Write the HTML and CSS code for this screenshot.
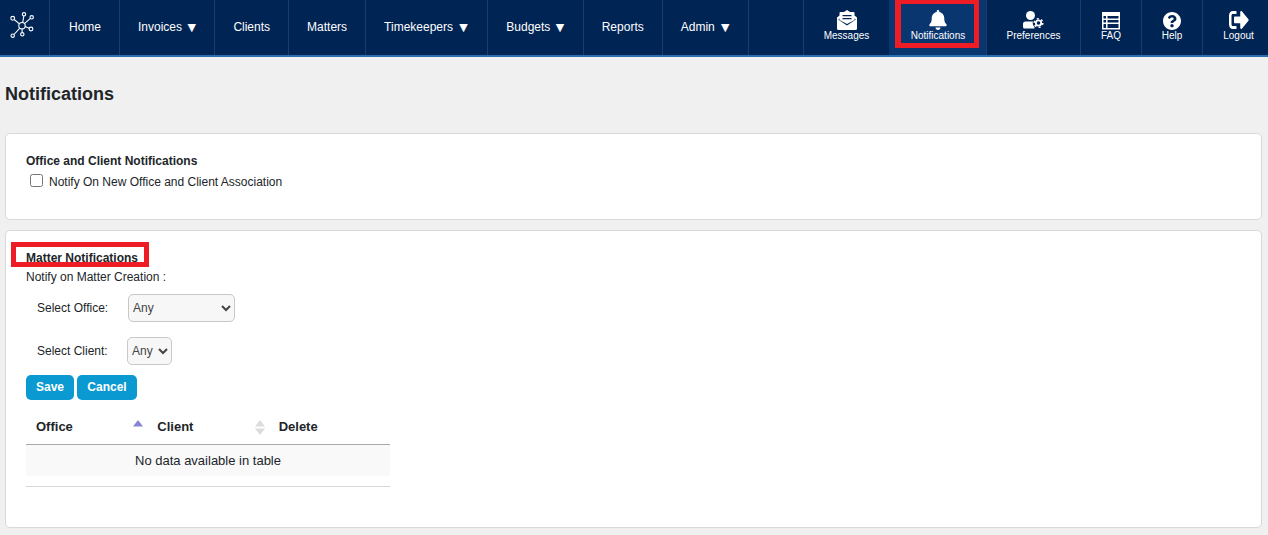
FILE: index.html
```html
<!DOCTYPE html>
<html lang="en">
<head>
<meta charset="utf-8">
<title>Notifications</title>
<link rel="stylesheet" href="styles.css">
</head>
<body>
<header class="topbar">
  <a class="brand" href="#" aria-label="Home">
    <svg width="26" height="27" viewBox="0 0 26 27" fill="none" stroke="#fff" stroke-width="1.1">
      <circle cx="12" cy="13.700" r="3.200"/>
      <circle cx="14" cy="2.300" r="1.700"/><circle cx="21.700" cy="5.300" r="1.700"/><circle cx="2.700" cy="6.300" r="1.900"/>
      <circle cx="21" cy="17" r="1.900"/><circle cx="12.300" cy="22.300" r="1.700"/><circle cx="2.700" cy="23.700" r="1.700"/>
      <path d="M12.700 10.600 13.800 4M14.400 11.600 20.400 6.400M9.400 11.800 4.200 7.500M15.100 14.600 19.100 16.300M12.100 17V20.600M9.800 16.100 4 22.500"/>
    </svg>
  </a>
  <nav class="mainnav">
    <a class="navlink" href="#">Home</a>
    <a class="navlink" href="#">Invoices <span class="caret">▼</span></a>
    <a class="navlink" href="#">Clients</a>
    <a class="navlink" href="#">Matters</a>
    <a class="navlink navlink-keepers" href="#">Timekeepers <span class="caret">▼</span></a>
    <a class="navlink" href="#">Budgets <span class="caret">▼</span></a>
    <a class="navlink" href="#">Reports</a>
    <a class="navlink navlink-admin" href="#">Admin <span class="caret">▼</span></a>
  </nav>
  <nav class="toolnav">
    <a class="tool tool-messages" href="#">
      <svg class="ico" width="20" height="20" viewBox="0 0 20 20"><path fill="#fff" fill-rule="evenodd" d="M10 0 13 2H16.500A1 1 0 0 1 17.500 3V5.500L20 7.500V18.500A1.500 1.500 0 0 1 18.500 20H1.500A1.500 1.500 0 0 1 0 18.500V7.500L2.500 5.500V3A1 1 0 0 1 3.500 2H7ZM5.500 5V6.300H14.500V5ZM5.500 8V9.300H14.500V8ZM1.500 9.200V9.800L10 15.500 18.500 9.800V9.200L17.500 8.500V10L10 14 2.500 10V8.500Z"/></svg>
      <span>Messages</span>
    </a>
    <a class="tool tool-active" href="#">
      <svg class="ico" width="20" height="20" viewBox="0 0 448 512"><path fill="#fff" d="M224 512c35.320 0 63.970-28.650 63.970-64H160.030c0 35.350 28.650 64 63.970 64zm215.390-149.710c-19.320-20.760-55.470-51.990-55.470-154.290 0-77.700-54.480-139.900-127.940-155.160V32c0-17.670-14.320-32-31.980-32s-31.980 14.330-31.980 32v20.840C118.560 68.100 64.080 130.300 64.080 208c0 102.300-36.150 133.530-55.470 154.290-6 6.450-8.660 14.160-8.610 21.710.11 16.400 12.980 32 32.100 32h383.800c19.120 0 32-15.600 32.100-32 .05-7.550-2.610-15.270-8.610-21.710z"/></svg>
      <span>Notifications</span>
      <i class="redbox redbox-nav"></i>
    </a>
    <a class="tool tool-prefs" href="#">
      <svg class="ico" width="21" height="20" viewBox="0 0 21 20">
        <circle cx="7.500" cy="5.500" r="4.500" fill="#fff"/>
        <path fill="#fff" d="M2.500 11.500H11.500V18.500H1.500A1.500 1.500 0 0 1 0 17V14A2.500 2.500 0 0 1 2.500 11.500Z"/>
        <circle cx="15.500" cy="13" r="5.800" fill="#002454"/>
        <circle cx="15.500" cy="13" r="2.700" fill="none" stroke="#fff" stroke-width="1.800"/>
        <circle cx="15.500" cy="13" r="4.300" fill="none" stroke="#fff" stroke-width="1.500" stroke-dasharray="2 2.500"/>
      </svg>
      <span>Preferences</span>
    </a>
    <a class="tool" href="#">
      <svg class="ico" width="18" height="20" viewBox="0 -2 18 20"><path fill="#fff" fill-rule="evenodd" d="M0 0H18V17.500H0ZM1.500 4V6.500H4V4ZM5.500 4V6.500H16.500V4ZM1.500 8V10.500H4V8ZM5.500 8V10.500H16.500V8ZM1.500 12V16H4V12ZM5.500 12V16H16.500V12Z"/></svg>
      <span>FAQ</span>
    </a>
    <a class="tool" href="#">
      <svg class="ico" width="18" height="20" viewBox="8 -47 496 551"><path fill="#fff" d="M504 256c0 136.997-111.043 248-248 248S8 392.997 8 256C8 119.083 119.043 8 256 8s248 111.083 248 248zM262.655 90c-54.497 0-89.255 22.957-116.549 63.758-3.536 5.286-2.353 12.415 2.715 16.258l34.699 26.310c5.205 3.947 12.621 3.008 16.665-2.122 17.864-22.658 30.113-35.797 57.303-35.797 20.429 0 45.698 13.148 45.698 32.958 0 14.976-12.363 22.667-32.534 33.976C247.128 238.528 216 254.941 216 296v4c0 6.627 5.373 12 12 12h56c6.627 0 12-5.373 12-12v-1.333c0-28.462 83.186-29.647 83.186-106.667 0-58.002-60.165-102-116.531-102zM256 338c-25.365 0-46 20.635-46 46 0 25.364 20.635 46 46 46s46-20.636 46-46c0-25.365-20.635-46-46-46z"/></svg>
      <span>Help</span>
    </a>
    <a class="tool tool-last" href="#">
      <svg class="ico" width="20" height="20" viewBox="0 42.670 512 426.670" preserveAspectRatio="none"><path fill="#fff" d="M497 273L329 441c-15 15-41 4.500-41-17v-96H152c-13.300 0-24-10.700-24-24v-96c0-13.300 10.700-24 24-24h136V88c0-21.400 25.900-32 41-17l168 168c9.300 9.400 9.300 24.600 0 34zM192 436v-40c0-6.600-5.400-12-12-12H96c-17.700 0-32-14.300-32-32V160c0-17.700 14.300-32 32-32h84c6.600 0 12-5.400 12-12V76c0-6.600-5.400-12-12-12H96c-53 0-96 43-96 96v192c0 53 43 96 96 96h84c6.600 0 12-5.400 12-12z"/></svg>
      <span>Logout</span>
    </a>
  </nav>
</header>

<main class="page">
  <h1 class="page-title">Notifications</h1>

  <section class="card card-office">
    <h2 class="card-heading">Office and Client Notifications</h2>
    <label class="check-row"><input type="checkbox" class="check"><span>Notify On New Office and Client Association</span></label>
  </section>

  <section class="card card-matter">
    <h2 class="card-heading"><i class="redbox redbox-heading"></i><span class="heading-text">Matter Notifications</span></h2>
    <p class="lead">Notify on Matter Creation :</p>
    <div class="field field-office">
      <label class="field-label" for="office">Select Office:</label>
      <select id="office" class="select select-office"><option>Any</option></select>
    </div>
    <div class="field field-client">
      <label class="field-label" for="client">Select Client:</label>
      <select id="client" class="select select-client"><option>Any</option></select>
    </div>
    <div class="actions">
      <button class="btn btn-save" type="button">Save</button>
      <button class="btn btn-cancel" type="button">Cancel</button>
    </div>
    <table class="grid">
      <thead>
        <tr>
          <th class="sorted">Office<svg class="sort" width="10" height="16" viewBox="0 0 10 16"><path fill="#8585d6" d="M5 0 10 6.500H0Z"/></svg></th>
          <th class="sorted">Client<svg class="sort" width="10" height="16" viewBox="0 0 10 16"><path fill="#dcdcdc" d="M5 0 10 6.500H0ZM0 8.500H10L5 15Z"/></svg></th>
          <th>Delete</th>
        </tr>
      </thead>
      <tbody>
        <tr><td colspan="3">No data available in table</td></tr>
      </tbody>
    </table>
  </section>
</main>
</body>
</html>
```
FILE: styles.css
```css
* { box-sizing: border-box; }
html, body { margin: 0; padding: 0; }
body {
  background: #f0f0f0;
  color: #212529;
  font-family: "Liberation Sans", Arial, sans-serif;
  font-size: 12px;
  height: 535px;
  overflow: hidden;
}
a { color: inherit; text-decoration: none; }

.topbar {
  display: flex;
  height: 57px;
  background: #002454;
  border-bottom: 2px solid #2a6eb0;
  color: #fff;
}
.brand {
  width: 50px;
  flex: none;
  border-right: 1px solid #1c3c69;
  padding: 12px 0 0 10px;
}
.brand svg { display: block; }
.mainnav { display: flex; }
.navlink {
  display: flex;
  align-items: center;
  padding: 0 18px 1px;
  border-right: 1px solid #1c3c69;
  white-space: pre;
}
.navlink:first-child { padding-left: 19px; }
.caret {
  width: 11px;
  padding-left: 2px;
  font-size: 11px;
  font-family: "DejaVu Sans", sans-serif;
  line-height: 1;
}
.navlink-keepers .caret { width: 13px; padding-left: 3px; }
.navlink-admin .caret { width: 12px; padding-left: 3px; }

.toolnav { display: flex; margin-left: auto; }
.tool {
  position: relative;
  display: flex;
  flex-direction: column;
  align-items: center;
  justify-content: flex-start;
  width: 61px;
  padding-top: 10px;
  border-left: 1px solid #1c3c69;
  font-size: 10px;
  line-height: 11px;
}
.tool .ico { display: block; height: 20px; }
.tool-messages { width: 86px; }
.tool-active { width: 97px; background: #0a3670; border-left-color: #0a3670; }
.tool-prefs { width: 94px; }
.tool-last { width: 66px; padding-left: 6px; }

.redbox { position: absolute; display: block; border: 5px solid #ee1c25; pointer-events: none; }
.redbox-nav { left: 5px; top: 0; width: 84px; height: 48px; border-width: 4px 5px 5px 6px; }
.redbox-heading { left: -15px; top: -9px; width: 138px; height: 25px; }
.heading-text { position: relative; }

.page { padding: 0 6px 0 5px; }
.page-title {
  margin: 0;
  padding-top: 27px;
  font-size: 18px;
  line-height: 20px;
  font-weight: 700;
  height: 76px;
}
.card {
  background: #fff;
  border: 1px solid #d9d9d9;
  border-radius: 5px;
  padding: 0 20px;
}
.card-office { height: 87px; padding-top: 20px; margin-bottom: 10px; }
.card-matter { height: 298px; padding-top: 20px; }
.card-heading {
  position: relative;
  margin: 0;
  font-size: 12px;
  line-height: 14px;
  font-weight: 700;
}
.check-row { display: flex; align-items: center; margin: 7px 0 0 4px; line-height: 14px; }
.check { margin: 0 6px 0 0; width: 13px; height: 13px; position: relative; top: -2px; }

.lead { margin: 5px 0 0; line-height: 14px; }
.field { display: flex; align-items: center; }
.field-office { margin-top: 10px; padding-left: 11px; }
.field-client { margin-top: 15px; padding-left: 11px; }
.field-label { width: 91px; }
.field-client .field-label { width: 90px; }
.select {
  height: 28px;
  font: 12px "Liberation Sans", Arial, sans-serif;
  color: #444;
  background-color: #f7f7f7;
  border: 1px solid #c8c8c8;
  border-radius: 5px;
  padding: 0;
}
.select-office { width: 107px; }
.select-client { width: 45px; }

.actions { display: flex; gap: 3px; margin-top: 10px; }
.btn {
  height: 25px;
  border: 0;
  border-radius: 5px;
  background: #0a9ad1;
  color: #fff;
  font: 700 12px "Liberation Sans", Arial, sans-serif;
  padding: 0 0 2px;
}
.btn-save { width: 48px; }
.btn-cancel { width: 60px; }

.grid {
  width: 364px;
  margin-top: 11px;
  border-collapse: separate;
  border-spacing: 0;
  table-layout: fixed;
}
.grid th {
  position: relative;
  text-align: left;
  font-size: 13px;
  line-height: 15px;
  font-weight: 700;
  padding: 8px 10px 10px;
  border-bottom: 1px solid #aaa;
}
.grid td {
  background: #f9f9f9;
  text-align: center;
  height: 31px;
  padding: 0;
  font-size: 13px;
  line-height: 15px;
  box-shadow: 0 10px 0 #fff, 0 11px 0 #d9d9d9;
}
.sort { position: absolute; right: 4px; top: 9px; }
```
